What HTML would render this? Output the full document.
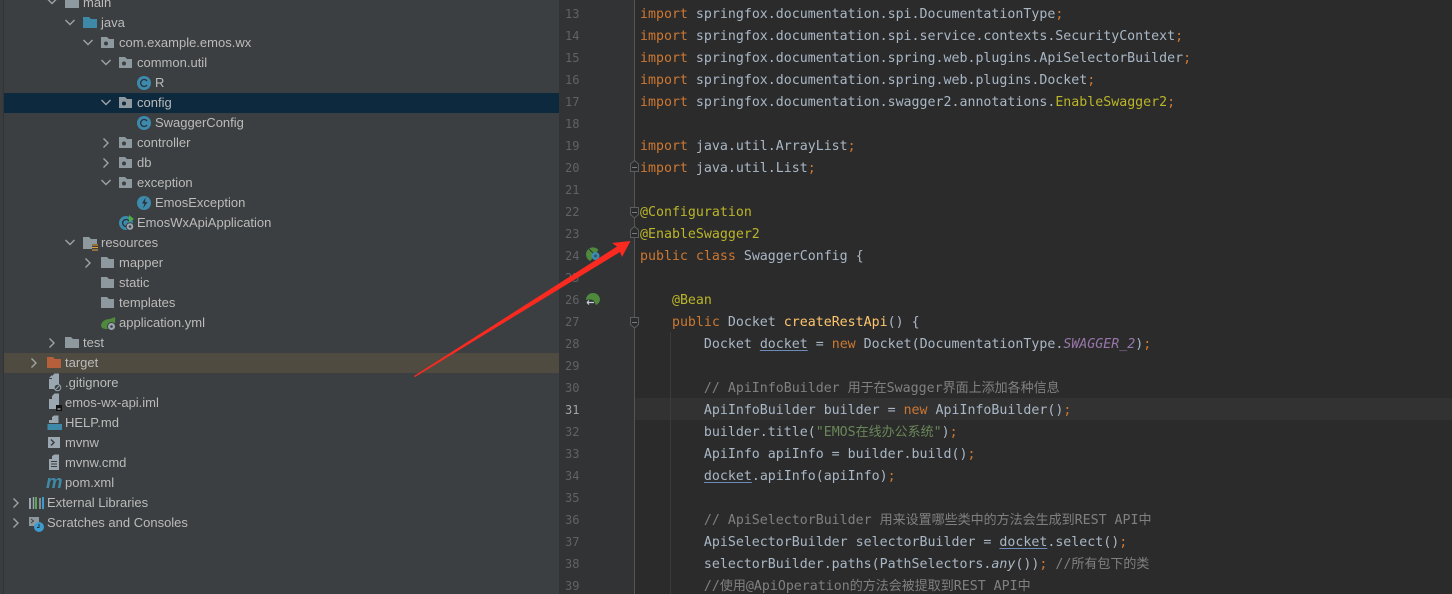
<!DOCTYPE html>
<html><head><meta charset="utf-8"><style>
html,body{margin:0;padding:0;background:#3c3f41}
#r{position:relative;width:1452px;height:594px;overflow:hidden;background:#3c3f41}
.a{position:absolute}
.t{position:absolute;margin-top:1px;font:13px/20px "Liberation Sans","Noto Sans CJK SC",sans-serif;color:#bbbbbb;white-space:nowrap}
.c{position:absolute;margin-top:4px;left:640px;font:13.28px/22px "DejaVu Sans Mono","Noto Sans CJK SC",monospace;color:#a9b7c6;white-space:pre}
.c i{font:normal 13px/0 "Noto Sans CJK SC",sans-serif;vertical-align:baseline}
.n{position:absolute;margin-top:1px;left:565px;width:16px;font:12px/22px "DejaVu Sans Mono",monospace;color:#606366}
.k{color:#cc7832}.y{color:#bbb529}.g{color:#6a8759}.m{color:#808080}.f{color:#ffc66d}
.u{text-decoration:underline;text-underline-offset:2px;text-decoration-color:#6d8bb8}
.ic{color:#9876aa;font-style:italic}
svg{position:absolute;overflow:visible}
</style></head><body><div id="r">
<div class="a" style="left:0;top:0;width:4px;height:594px;background:#3a3d3f;border-right:1px solid #323232;box-sizing:border-box"></div>
<div class="a" style="left:4px;top:93px;width:555px;height:20px;background:#0d293e"></div>
<div class="a" style="left:4px;top:353px;width:555px;height:20px;background:#4f4b41"></div>
<div class="a" style="left:559px;top:0;width:75px;height:594px;background:#313335"></div>
<div class="a" style="left:634px;top:0;width:818px;height:594px;background:#2b2b2b"></div>
<div class="a" style="left:634px;top:0;width:1px;height:594px;background:#555555"></div>
<div class="a" style="left:635px;top:398px;width:817px;height:22px;background:#323232"></div>
<div class="a" style="left:670px;top:332px;width:1px;height:262px;background:#3b3b3b"></div>

<svg width="1452" height="594" style="left:0;top:0" fill="none">
<g stroke="#a0a3a5" stroke-width="1.4">
<path d="M47.500 -1l4.500 4.500 4.500-4.500M65.500 20l4.500 4.500 4.500-4.500M83.500 40l4.500 4.500 4.500-4.500M101.500 60l4.500 4.500 4.500-4.500M101.500 100l4.500 4.500 4.500-4.500M101.500 180l4.500 4.500 4.500-4.500M65.500 240l4.500 4.500 4.500-4.500"/>
<path d="M103.500 138.500l4.500 4.500-4.500 4.500M103.500 158.500l4.500 4.500-4.500 4.500M85.500 258.500l4.500 4.500-4.500 4.500M49.500 338.500l4.500 4.500-4.500 4.500M31.500 358.500l4.500 4.500-4.500 4.500M13.500 498.500l4.500 4.500-4.500 4.500M13.500 518.500l4.500 4.500-4.500 4.500"/>
</g>
<g fill="#8d989f">
<path d="M65 -3h6l2 2h6v9H65z"/>
<path d="M101 257h6l2 2h5v9h-13zM101 277h6l2 2h5v9h-13zM101 297h6l2 2h5v9h-13zM65 337h6l2 2h6v9H65z"/>
</g>
<path d="M83 17h6l2 2h6v9H83z" fill="#3f89a8"/>
<path d="M47 357h6l2 2h6v9H47z" fill="#b5603a"/>
<g fill="#8d989f">
<path d="M101 37h6l2 2h5v9h-13zM119 57h6l2 2h5v9h-13zM119 97h6l2 2h5v9h-13zM119 137h6l2 2h5v9h-13zM119 157h6l2 2h5v9h-13zM119 177h6l2 2h5v9h-13z"/>
</g>
<g fill="#3c3f41"><circle cx="106" cy="43.500" r="2"/><circle cx="124" cy="63.500" r="2"/><circle cx="124" cy="103.500" r="2" fill="#0d293e"/><circle cx="124" cy="143.500" r="2"/><circle cx="124" cy="163.500" r="2"/><circle cx="124" cy="183.500" r="2"/></g>
<path d="M83 237h6l2 2h6v5h-5v5H83z" fill="#8d989f"/>
<path d="M92 245h6M92 247.500h6M92 250h6" stroke="#e5a33a" stroke-width="1"/>
<g fill="#3d8aac"><circle cx="144" cy="83" r="7"/><circle cx="144" cy="123" r="7"/><circle cx="144" cy="203" r="7"/><circle cx="126" cy="223" r="7"/></g>
<path d="M147 81a3.500 3.500 0 1 0 0 4M147 121a3.500 3.500 0 1 0 0 4M129 221a3.500 3.500 0 1 0 0 4" stroke="#26323a" stroke-width="1.300"/>
<path d="M145.500 197.500l-3.500 6h2.500l-1.500 5 4.500-6.500h-2.500z" fill="#2b3338"/>
<path d="M129 215l5 4-5 3z" fill="#4caf3e"/>
<circle cx="130" cy="226.500" r="3.800" fill="#9aa7b0" stroke="#3c3f41"/><circle cx="130" cy="226.500" r="1.300" fill="#3c3f41"/>
<path d="M101 326c0-5 5-7 9-7l5-2c1 6-1 12-7 12-3 0-6 0-7-3z" fill="#4f8a3c"/>
<circle cx="111.500" cy="326.500" r="4" fill="#9aa7b0" stroke="#3c3f41"/><circle cx="111.500" cy="326.500" r="1.300" fill="#3c3f41"/>
<path d="M52 376l2.500-2.500H59V389H49V379h3zM49 378l3-3v3z" fill="#9aa7b0"/>
<circle cx="57.500" cy="387.500" r="3.300" fill="#3c3f41" stroke="#9aa7b0" stroke-width="1"/><path d="M55.500 389.500l4-4" stroke="#9aa7b0"/>
<path d="M52 396l2.500-2.500H59V409H49V399h3z" fill="#9aa7b0"/>
<rect x="56" y="405" width="6" height="6" fill="#111"/><path d="M57.500 409h3" stroke="#ddd"/>
<path d="M52 417l2-1.500h4.500V423H49v-3h3z" fill="#9aa7b0"/><rect x="47.500" y="424" width="14.500" height="6" fill="#3f89a8"/>
<rect x="48" y="437" width="12" height="11" fill="#9aa7b0"/><path d="M51 439.500l3 3-3 3" stroke="#3c3f41" stroke-width="1.500"/>
<path d="M52 456l2.500-1.500H59V470H49V459h3z" fill="#9aa7b0"/><path d="M51 461.500h6M51 464h6M51 466.500h6" stroke="#3c3f41"/>
<text x="46" y="488" style="font:italic bold 18.500px 'Liberation Sans',sans-serif" fill="#3f89a8">m</text>
<path d="M30 498v11" stroke="#9aa7b0" stroke-width="2"/><path d="M33.500 497v12" stroke="#9aa7b0" stroke-width="1.500"/><path d="M36 497v12" stroke="#5aa84e" stroke-width="2"/><path d="M40 498v11" stroke="#9aa7b0" stroke-width="1.500"/><path d="M43 497v12" stroke="#3d9bd0" stroke-width="2"/>
<rect x="29" y="517" width="10" height="9" fill="#8d989f"/><path d="M31 519l2.500 2-2.500 2" stroke="#3c3f41"/>
<circle cx="39" cy="527" r="5" fill="#3d9bd0"/><path d="M39 524v3.500h-2" stroke="#26323a" stroke-width="1"/>
<g stroke="#5c5f61" fill="#2b2b2b" stroke-width="1">
<path d="M630.500 171.500v-7.500l4-3.500 4 3.500v7.500z"/>
<path d="M630.500 207.500h8v7l-4 3.500-4-3.500z"/>
<path d="M630.500 237.500v-7.500l4-3.500 4 3.500v7.500z"/>
<path d="M630.500 317.500h8v7l-4 3.500-4-3.500z"/>
</g>
<path d="M632 167.500h5M632 212.500h5M632 233.500h5M632 322.500h5" stroke="#7a7d7f"/>
<path d="M586 254a7 7 0 0 1 12.500-4l-5 6-3 5c-3-1-4.500-4-4.500-7z" fill="#4f8a3c"/><path d="M589 249l5 5" stroke="#313335"/><circle cx="595.500" cy="256" r="4" fill="#3d8aac"/><circle cx="595.500" cy="256" r="1.500" fill="#2b5a70"/>
<path d="M586 300a7 7 0 0 1 14 0c-.5 2.500-2 4-4 5l-2-4c-2-2-5-1.500-8-1z" fill="#4f8a3c"/><path d="M587 302.500h7M587 302.500l2-2M587 302.500l2 2" stroke="#c4ccd4" stroke-width="1.200"/>
</svg>

<div class="t" style="left:83px;top:-8px">main</div>
<div class="t" style="left:101px;top:12px">java</div>
<div class="t" style="left:119px;top:32px">com.example.emos.wx</div>
<div class="t" style="left:137px;top:52px">common.util</div>
<div class="t" style="left:155px;top:72px">R</div>
<div class="t" style="left:137px;top:92px">config</div>
<div class="t" style="left:155px;top:112px">SwaggerConfig</div>
<div class="t" style="left:137px;top:132px">controller</div>
<div class="t" style="left:137px;top:152px">db</div>
<div class="t" style="left:137px;top:172px">exception</div>
<div class="t" style="left:155px;top:192px">EmosException</div>
<div class="t" style="left:137px;top:212px">EmosWxApiApplication</div>
<div class="t" style="left:101px;top:232px">resources</div>
<div class="t" style="left:119px;top:252px">mapper</div>
<div class="t" style="left:119px;top:272px">static</div>
<div class="t" style="left:119px;top:292px">templates</div>
<div class="t" style="left:119px;top:312px">application.yml</div>
<div class="t" style="left:83px;top:332px">test</div>
<div class="t" style="left:65px;top:352px">target</div>
<div class="t" style="left:65px;top:372px">.gitignore</div>
<div class="t" style="left:65px;top:392px">emos-wx-api.iml</div>
<div class="t" style="left:65px;top:412px">HELP.md</div>
<div class="t" style="left:65px;top:432px">mvnw</div>
<div class="t" style="left:65px;top:452px">mvnw.cmd</div>
<div class="t" style="left:65px;top:472px">pom.xml</div>
<div class="t" style="left:47px;top:492px">External Libraries</div>
<div class="t" style="left:47px;top:512px">Scratches and Consoles</div>

<div class="n" style="top:2px">13</div><div class="n" style="top:24px">14</div><div class="n" style="top:46px">15</div><div class="n" style="top:68px">16</div><div class="n" style="top:90px">17</div><div class="n" style="top:112px">18</div><div class="n" style="top:134px">19</div><div class="n" style="top:156px">20</div><div class="n" style="top:178px">21</div><div class="n" style="top:200px">22</div><div class="n" style="top:222px">23</div><div class="n" style="top:244px">24</div><div class="n" style="top:266px">25</div><div class="n" style="top:288px">26</div><div class="n" style="top:310px">27</div><div class="n" style="top:332px">28</div><div class="n" style="top:354px">29</div><div class="n" style="top:376px">30</div><div class="n" style="top:398px;color:#a4a3a3">31</div><div class="n" style="top:420px">32</div><div class="n" style="top:442px">33</div><div class="n" style="top:464px">34</div><div class="n" style="top:486px">35</div><div class="n" style="top:508px">36</div><div class="n" style="top:530px">37</div><div class="n" style="top:552px">38</div><div class="n" style="top:574px">39</div>

<div class="c" style="top:0px"><span class="k">import</span> springfox.documentation.spi.DocumentationType<span class="k">;</span></div>
<div class="c" style="top:22px"><span class="k">import</span> springfox.documentation.spi.service.contexts.SecurityContext<span class="k">;</span></div>
<div class="c" style="top:44px"><span class="k">import</span> springfox.documentation.spring.web.plugins.ApiSelectorBuilder<span class="k">;</span></div>
<div class="c" style="top:66px"><span class="k">import</span> springfox.documentation.spring.web.plugins.Docket<span class="k">;</span></div>
<div class="c" style="top:88px"><span class="k">import</span> springfox.documentation.swagger2.annotations.<span class="y">EnableSwagger2</span><span class="k">;</span></div>
<div class="c" style="top:132px"><span class="k">import</span> java.util.ArrayList<span class="k">;</span></div>
<div class="c" style="top:154px"><span class="k">import</span> java.util.List<span class="k">;</span></div>
<div class="c" style="top:198px"><span class="y">@Configuration</span></div>
<div class="c" style="top:220px"><span class="y">@EnableSwagger2</span></div>
<div class="c" style="top:242px"><span class="k">public class</span> SwaggerConfig {</div>
<div class="c" style="top:286px">    <span class="y">@Bean</span></div>
<div class="c" style="top:308px">    <span class="k">public</span> Docket <span class="f">createRestApi</span>() {</div>
<div class="c" style="top:330px">        Docket <span class="u">docket</span> = <span class="k">new</span> Docket(DocumentationType.<span class="ic">SWAGGER_2</span>)<span class="k">;</span></div>
<div class="c m" style="top:374px">        // ApiInfoBuilder <i>用于在</i>Swagger<i>界面上添加各种信息</i></div>
<div class="c" style="top:396px">        ApiInfoBuilder builder = <span class="k">new</span> ApiInfoBuilder()<span class="k">;</span></div>
<div class="c" style="top:418px">        builder.title(<span class="g">"EMOS<i>在线办公系统</i>"</span>)<span class="k">;</span></div>
<div class="c" style="top:440px">        ApiInfo apiInfo = builder.build()<span class="k">;</span></div>
<div class="c" style="top:462px">        <span class="u">docket</span>.apiInfo(apiInfo)<span class="k">;</span></div>
<div class="c m" style="top:506px">        // ApiSelectorBuilder <i>用来设置哪些类中的方法会生成到</i>REST API<i>中</i></div>
<div class="c" style="top:528px">        ApiSelectorBuilder selectorBuilder = <span class="u">docket</span>.select()<span class="k">;</span></div>
<div class="c" style="top:550px">        selectorBuilder.paths(PathSelectors.<span style="font-style:italic">any</span>())<span class="k">;</span> <span class="m">//<i>所有包下的类</i></span></div>
<div class="c m" style="top:572px">        //<i>使用</i>@ApiOperation<i>的方法会被提取到</i>REST API<i>中</i></div>

<svg width="1452" height="594" style="left:0;top:0"><polygon points="414,376 617,246.500 612,243 630.500,241 622,257 620,252 415,377" fill="#fb2a20"/></svg>
</div></body></html>
